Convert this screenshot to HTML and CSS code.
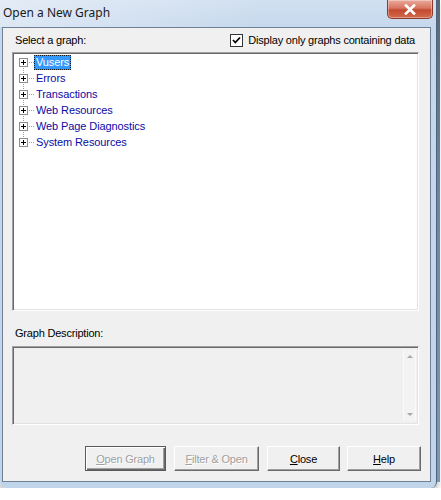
FILE: index.html
```html
<!DOCTYPE html>
<html lang="en">
<head>
    <meta charset="UTF-8">
    <title>Open a New Graph</title>
    <link rel="stylesheet" href="styles.css">
</head>
<body>

<div class="window">
    <div class="titlebar">
        <span class="title">Open a New Graph</span>
        <div class="close-btn">
            <svg width="14" height="11" viewBox="0 0 14 11">
                <path d="M3 1.5 L11 9.5 M11 1.5 L3 9.5" stroke="#fff" stroke-width="2.6" stroke-linecap="square"/>
            </svg>
        </div>
    </div>

    <div class="client">
        <div class="top-row">
            <span class="caption">Select a graph:</span>
            <div class="check">
                <span class="check-box">
                    <svg width="9" height="9" viewBox="0 0 9 9">
                        <path d="M1 4 L3.3 6.5 L8 1.5" stroke="#000" stroke-width="1.8" fill="none"/>
                    </svg>
                </span>
                <span>Display only graphs containing data</span>
            </div>
        </div>

        <div class="tree">
            <div class="node first"><span class="plus"></span><span class="dash"></span><span class="label selected">Vusers</span></div>
            <div class="node"><span class="plus"></span><span class="dash"></span><span class="label">Errors</span></div>
            <div class="node"><span class="plus"></span><span class="dash"></span><span class="label">Transactions</span></div>
            <div class="node"><span class="plus"></span><span class="dash"></span><span class="label">Web Resources</span></div>
            <div class="node"><span class="plus"></span><span class="dash"></span><span class="label">Web Page Diagnostics</span></div>
            <div class="node last"><span class="plus"></span><span class="dash"></span><span class="label">System Resources</span></div>
        </div>

        <div class="caption desc-label">Graph Description:</div>
        <div class="desc">
            <div class="scrollbar">
                <span class="arrow up"></span>
                <span class="arrow down"></span>
            </div>
        </div>

        <div class="buttons">
            <div class="btn default disabled w-open"><u>O</u>pen Graph</div>
            <div class="btn disabled w-filter"><u>F</u>ilter &amp; Open</div>
            <div class="btn w-close"><u>C</u>lose</div>
            <div class="btn w-help"><u>H</u>elp</div>
        </div>
    </div>
</div>
<div class="edge"></div>

</body>
</html>
```

FILE: styles.css
```css
body {
    margin: 0;
    background: #fff;
    display: flex;
    align-items: flex-start;
    font-family: 'Liberation Sans', Arial, sans-serif;
    font-size: 11px;
    letter-spacing: -0.2px;
    color: #000;
}

.window {
    width: 437px;
    box-sizing: border-box;
    padding-bottom: 6px;
    background: linear-gradient(to bottom, #d2e0f0 0px, #c6d8ed 27px, #c0d4ea 100%);
    border-right: 1px solid #4f6379;
    border-radius: 0 0 6px 6px;
    box-shadow: 0 3px 7px rgba(0, 0, 0, 0.35);
}

.titlebar {
    height: 27px;
    display: flex;
    justify-content: space-between;
    align-items: flex-start;
    background: linear-gradient(to right, rgba(255, 255, 255, 0.4), rgba(255, 255, 255, 0) 60%);
}

.title {
    font-family: 'Noto Sans', 'Open Sans', sans-serif;
    font-size: 12px;
    letter-spacing: 0;
    line-height: 16px;
    margin: 5px 0 0 3px;
    color: #1a1a1a;
}

.close-btn {
    width: 46px;
    height: 19px;
    box-sizing: border-box;
    margin-right: 3px;
    border: 1px solid #8b3a2c;
    border-top: none;
    border-radius: 0 0 5px 5px;
    background: linear-gradient(to bottom, #e9a99a 0%, #d97562 45%, #c24a31 55%, #d36a4c 100%);
    display: flex;
    justify-content: center;
    align-items: center;
    box-shadow: inset 0 0 0 1px rgba(255, 255, 255, 0.35);
}

.client {
    height: 455px;
    box-sizing: border-box;
    margin: 0 5px 0 2px;
    border: 1px solid #6f8094;
    background: #f0f0f0;
    padding: 0 11px 0 9px;
}

.top-row {
    height: 24px;
    display: flex;
    justify-content: space-between;
    align-items: center;
}

.caption {
    padding-left: 3px;
}

.check {
    display: flex;
    align-items: center;
    gap: 5px;
    padding-right: 4px;
}

.check-box {
    width: 13px;
    height: 13px;
    box-sizing: border-box;
    border: 1px solid #333;
    background: #fff;
    display: flex;
    justify-content: center;
    align-items: center;
}

.tree, .desc {
    box-sizing: border-box;
    border: 1px solid;
    border-color: #a0a0a0 #fff #fff #a0a0a0;
    box-shadow: inset 1px 1px 0 #696969, inset -1px -1px 0 #e3e3e3;
}

.tree {
    height: 259px;
    background: #fff;
    padding: 1px 0 0 6px;
}

.node {
    height: 16px;
    display: flex;
    align-items: center;
    background-image: repeating-linear-gradient(to bottom, #a0a0a0 0 1px, transparent 1px 2px);
    background-repeat: no-repeat;
    background-size: 1px 100%;
    background-position: 4px 0;
}

.node.first {
    background-size: 1px 8px;
    background-position: 4px 8px;
}

.node.last {
    background-size: 1px 8px;
    background-position: 4px 0;
}

.plus {
    width: 9px;
    height: 9px;
    box-sizing: border-box;
    border: 1px solid #8e8e8e;
    background:
        linear-gradient(#000, #000) center / 5px 1px no-repeat,
        linear-gradient(#000, #000) center / 1px 5px no-repeat,
        #fff;
}

.dash {
    width: 5px;
    height: 1px;
    background: repeating-linear-gradient(to right, #a0a0a0 0 1px, transparent 1px 2px);
    margin-left: 1px;
}

.label {
    color: #0a0aa6;
    letter-spacing: -0.1px;
    padding: 0 1px;
    line-height: 13px;
    border: 1px solid transparent;
}

.label.selected {
    background: #3399ff;
    color: #fff;
    border: 1px dotted #1a1a1a;
}

.desc-label {
    margin-top: 15px;
    line-height: 14px;
}

.desc {
    margin-top: 6px;
    height: 79px;
    background: #f0f0f0;
    display: flex;
    justify-content: flex-end;
    padding: 3px 2px 3px 0;
}

.scrollbar {
    width: 13px;
    box-sizing: border-box;
    border-left: 1px solid #fafafa;
    border-right: 1px solid #fafafa;
    background: #f3f3f3;
    display: flex;
    flex-direction: column;
    justify-content: space-between;
    align-items: center;
    padding: 5px 0;
}

.arrow {
    width: 0;
    height: 0;
    border-left: 3px solid transparent;
    border-right: 3px solid transparent;
}

.arrow.up {
    border-bottom: 3px solid #a8a8a8;
}

.arrow.down {
    border-top: 3px solid #a8a8a8;
}

.buttons {
    margin-top: 21px;
    margin-right: -2px;
    display: flex;
    justify-content: flex-end;
    gap: 8px;
}

.btn {
    height: 25px;
    box-sizing: border-box;
    border: 1px solid;
    border-color: #fff #696969 #696969 #fff;
    box-shadow: inset -1px -1px 0 #a0a0a0;
    background: #f0f0f0;
    display: flex;
    justify-content: center;
    align-items: center;
}

.btn.default {
    border: 1px solid #5a5a5a;
    box-shadow: inset 1px 1px 0 #fff, inset -1px -1px 0 #696969, inset -2px -2px 0 #a0a0a0;
}

.btn.disabled {
    color: #a0a0a0;
    text-shadow: 1px 1px 0 #fff;
}

.btn u {
    text-decoration: underline;
}

.w-open { width: 81px; }
.w-filter { width: 85px; }
.w-close { width: 73px; }
.w-help { width: 74px; margin-left: -1px; }

.edge {
    width: 3px;
    height: 482px;
    background: linear-gradient(to bottom, #5b6675, #6a86a6 40%, #7c97b6);
}
```
